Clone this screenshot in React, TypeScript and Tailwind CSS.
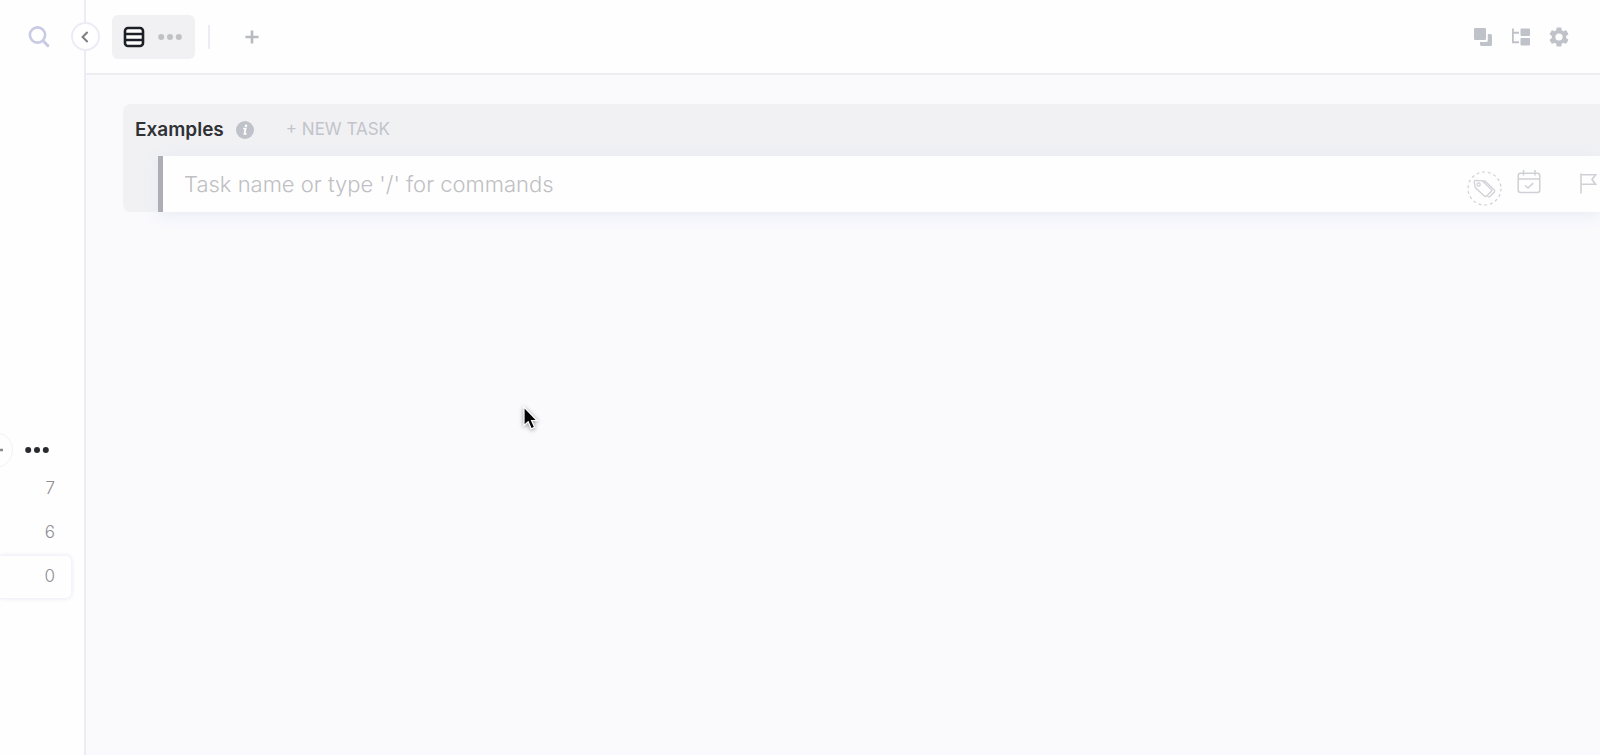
import type { ReactNode } from "react";

function Dots({ className }: { className: string }) {
  return (
    <svg viewBox="0 0 24 6" className={className} fill="currentColor" aria-hidden="true">
      <circle cx="3.2" cy="3" r="3" />
      <circle cx="12" cy="3" r="3" />
      <circle cx="20.8" cy="3" r="3" />
    </svg>
  );
}

function IconButton({ label, children }: { label: string; children: ReactNode }) {
  return (
    <button type="button" aria-label={label} className="flex size-5 items-center justify-center">
      {children}
    </button>
  );
}

function Sidebar() {
  const counts = [7, 6, 0];
  return (
    <aside className="relative z-10 w-[86px] shrink-0 border-r-2 border-[#ececf4] bg-[#fefefe]">
      <div className="flex h-[73px] items-center pl-7">
        <button type="button" aria-label="Search" className="text-[#c9cae3]">
          <svg viewBox="0 0 22 22" className="size-[22px]" fill="none" stroke="currentColor" aria-hidden="true">
            <circle cx="9.5" cy="9" r="7.6" strokeWidth="2.6" />
            <path d="M15 14.8l4.8 4.8" strokeWidth="3" strokeLinecap="round" />
          </svg>
        </button>
      </div>
      <button
        type="button"
        aria-label="Collapse sidebar"
        className="absolute top-[22px] -right-4 flex size-[29px] items-center justify-center rounded-full border-2 border-[#ececf4] bg-white pr-0.5 text-[#7c7d80]"
      >
        <svg viewBox="0 0 8 12" className="h-3 w-2" fill="none" stroke="currentColor" strokeWidth="2" aria-hidden="true">
          <path d="M6.6 1L1.6 6l5 5" />
        </svg>
      </button>
      <div className="mt-[359px] overflow-hidden">
        <div className="flex h-[35px] items-center justify-end gap-3 pr-[35px]">
          <button
            type="button"
            aria-label="Add"
            className="flex size-9 shrink-0 items-center justify-center rounded-full border border-[#f1f1f8] text-[#8a8b8e]"
          >
            <svg viewBox="0 0 16 16" className="size-4" stroke="currentColor" strokeWidth="2.4" aria-hidden="true">
              <path d="M0 8h16M8 0v16" />
            </svg>
          </button>
          <button type="button" aria-label="More" className="shrink-0 text-[#292a2d]">
            <Dots className="h-1.5 w-6" />
          </button>
        </div>
        <ul className="pr-3 pb-2">
          {counts.map((count) => (
            <li
              key={count}
              className={
                count === 0
                  ? "flex h-11 items-center justify-end rounded-r-md border border-l-0 border-[#f3f3fa] bg-[#fefefe] pr-4 text-[17px] font-light text-[#8e8f92] shadow-[0_0_4px_#ececf6]"
                  : "flex h-11 items-center justify-end pr-[17px] text-[17px] font-light text-[#8e8f92]"
              }
            >
              {count}
            </li>
          ))}
        </ul>
      </div>
    </aside>
  );
}

function Header() {
  return (
    <header className="flex h-[75px] items-center border-b-2 border-[#ededf4] bg-[#fefefe] pr-[31px] pl-[26px]">
      <div className="flex h-11 items-center gap-[13px] rounded-md bg-[#f1f1f4] px-[11px]">
        <button type="button" aria-label="List view" className="text-[#1d2026]">
          <svg viewBox="0 0 22 22" className="size-[22px]" aria-hidden="true">
            <rect x="2" y="2" width="18" height="18" rx="3" fill="#fff" stroke="currentColor" strokeWidth="2.6" />
            <path d="M2 8h18M2 14h18" stroke="currentColor" strokeWidth="2.4" />
          </svg>
        </button>
        <button type="button" aria-label="View options" className="pr-0.5 text-[#bfc1c5]">
          <Dots className="h-1.5 w-6" />
        </button>
      </div>
      <div className="ml-[13px] h-6 w-0.5 bg-[#ececf3]" />
      <button type="button" aria-label="Add view" className="ml-[35px] text-[#b9babf]">
        <svg viewBox="0 0 14 14" className="size-3.5" stroke="currentColor" strokeWidth="2.6" aria-hidden="true">
          <path d="M0.5 7h13M7 0.5v13" />
        </svg>
      </button>
      <div className="ml-auto flex items-center gap-[18px] text-[#bfc2c8]">
        <IconButton label="Show closed">
          <svg viewBox="0 0 20 20" className="size-5" fill="currentColor" aria-hidden="true">
            <rect x="1" y="1" width="12" height="12" rx="1.2" />
            <path d="M14.4 7H17.4Q19 7 19 8.6V17.4Q19 19 17.4 19H8.6Q7 19 7 17.4V15H13.4Q14.8 15 14.8 13.6V7Z" />
          </svg>
        </IconButton>
        <IconButton label="Subtasks">
          <svg viewBox="0 0 20 20" className="size-5" fill="currentColor" aria-hidden="true">
            <path d="M1 1.5H2.8V4.7H8V6.7H2.8V14.2H8V16.2H1Z" />
            <rect x="9.5" y="1.5" width="9.5" height="7.5" rx="1" />
            <rect x="9.5" y="11" width="9.5" height="7.5" rx="1" />
          </svg>
        </IconButton>
        <IconButton label="Settings">
          <svg viewBox="2 2 20 20" className="size-5" fill="currentColor" aria-hidden="true">
            <path d="M19.14 12.94c.04-.3.06-.61.06-.94 0-.32-.02-.64-.07-.94l2.03-1.58a.49.49 0 0 0 .12-.61l-1.92-3.32a.488.488 0 0 0-.59-.22l-2.39.96c-.5-.38-1.03-.7-1.62-.94l-.36-2.54a.484.484 0 0 0-.48-.41h-3.84c-.24 0-.43.17-.47.41l-.36 2.54c-.59.24-1.13.57-1.62.94l-2.39-.96c-.22-.08-.47 0-.59.22L2.74 8.87c-.12.21-.08.47.12.61l2.03 1.58c-.05.3-.09.63-.09.94s.02.64.07.94l-2.03 1.58a.49.49 0 0 0-.12.61l1.92 3.32c.12.22.37.29.59.22l2.39-.96c.5.38 1.03.7 1.62.94l.36 2.54c.05.24.24.41.48.41h3.84c.24 0 .44-.17.47-.41l.36-2.54c.59-.24 1.13-.56 1.62-.94l2.39.96c.22.08.47 0 .59-.22l1.92-3.32c.12-.22.07-.47-.12-.61l-2.01-1.58zM12 15.6A3.6 3.6 0 1 1 12 8.4a3.6 3.6 0 0 1 0 7.2z" />
          </svg>
        </IconButton>
      </div>
    </header>
  );
}

function TaskRow() {
  return (
    <div className="ml-[35px] flex h-14 items-center border-l-[5px] border-[#adadb6] bg-[#fefefe] shadow-[0_2px_16px_#e6e9f2]">
      <input
        type="text"
        aria-label="Task name"
        placeholder="Task name or type '/' for commands"
        className="h-full min-w-0 flex-1 bg-transparent pl-[21px] text-[22px] font-light text-[#2a2b2e] outline-none placeholder:text-[#bfc0c3]"
      />
      <div className="flex h-full shrink-0 text-[#d0d1d6]">
        <button type="button" aria-label="Tags" className="mt-[15px] h-[35px]">
          <svg viewBox="0 0 35 35" className="size-[35px]" fill="none" stroke="currentColor" aria-hidden="true">
            <circle cx="17.5" cy="17.5" r="16.5" strokeWidth="1.2" strokeDasharray="3 2.76" />
            <path
              d="M7.2 10.5Q7.2 9.3 8.4 9.3L15.2 9.8L24.2 18.4Q25.2 19.5 24.2 20.5L19.5 25Q18.4 26 17.3 25L8.2 16.5Z"
              strokeWidth="1.3"
              strokeLinejoin="round"
            />
            <path d="M15.2 9.8L18.2 10.2L27.4 19.2Q28.2 20.1 27.4 21L22.8 25.4Q21.7 26.3 20.5 25.3" strokeWidth="1.3" />
            <circle cx="11.6" cy="13.5" r="1.6" strokeWidth="1.2" />
          </svg>
        </button>
        <button type="button" aria-label="Due date" className="mt-3.5 ml-[15px] h-6">
          <svg viewBox="0 0 24 24" className="size-6" fill="none" stroke="currentColor" strokeWidth="1.5" aria-hidden="true">
            <rect x="1.2" y="3.2" width="21.6" height="19.3" rx="2.5" />
            <path d="M1.2 9H22.800M6.5 0V5.5M18 0V5.5" />
            <path d="M8 15.5l3 2.6 5.2-5" />
          </svg>
        </button>
        <button type="button" aria-label="Priority" className="mt-[17px] ml-[38px] h-[21px] pr-[3px]">
          <svg viewBox="0 0 18 21" className="h-[21px] w-[18px]" fill="none" stroke="currentColor" strokeWidth="1.6" aria-hidden="true">
            <path d="M2 0.5V20.5M2 1.8H16.5L13 6.5L16.5 11.2H2" />
          </svg>
        </button>
      </div>
    </div>
  );
}

export default function App() {
  return (
    <div className="relative flex min-h-screen overflow-hidden bg-[#fafafd] font-['Inter','Noto_Sans',sans-serif]">
      <Sidebar />
      <div className="min-w-0 flex-1">
        <Header />
        <main className="pt-[29px] pl-[37px]">
          <section className="rounded-l-lg bg-[#f1f1f4]">
            <div className="flex h-[52px] items-center pl-3">
              <h1 className="text-[19px] font-semibold text-[#303134]">Examples</h1>
              <button type="button" aria-label="List info" className="ml-3 text-[#bfc2c8]">
                <svg viewBox="0 0 18 18" className="size-[18px]" aria-hidden="true">
                  <circle cx="9" cy="9" r="9" fill="currentColor" />
                  <circle cx="10" cy="4.7" r="1.3" fill="#fff" />
                  <path d="M7.3 7.7H9.6L8.4 12.8H10.5" fill="none" stroke="#fff" strokeWidth="1.7" />
                </svg>
              </button>
              <button type="button" className="ml-8 text-[17px] text-[#c1c4ca]">
                + NEW TASK
              </button>
            </div>
            <TaskRow />
          </section>
        </main>
      </div>
      <svg
        viewBox="0 0 20 30"
        className="pointer-events-none absolute top-[404px] left-[521px] h-[30px] w-5 drop-shadow-[0_1px_2px_#00000066]"
        aria-hidden="true"
      >
        <path
          d="M3 3V21.5L7.2 17.8L10.2 24.8L13.6 23.3L10.6 16.5H16Z"
          fill="#050505"
          stroke="#fff"
          strokeWidth="1.2"
        />
      </svg>
    </div>
  );
}
